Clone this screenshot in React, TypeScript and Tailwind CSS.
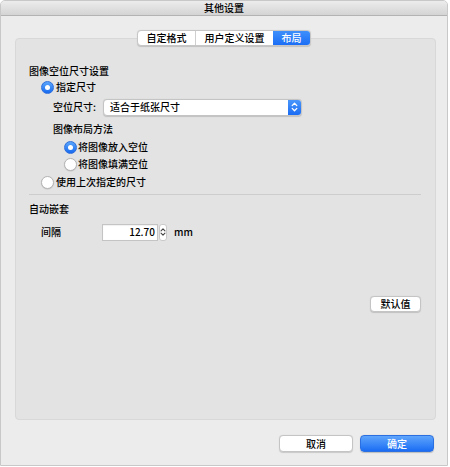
import React from "react"

const font = { fontFamily: '"Noto Sans CJK SC", "Noto Sans", sans-serif' }

function Radio({ checked }: { checked?: boolean }) {
  if (checked) {
    return (
      <span className="flex h-[13px] w-[13px] shrink-0 items-center justify-center rounded-full border border-[#2f6fdc] bg-gradient-to-b from-[#5aa5fb] to-[#1669f0]">
        <span className="h-[5px] w-[5px] rounded-full bg-white" />
      </span>
    )
  }
  return (
    <span className="h-[13px] w-[13px] shrink-0 rounded-full border border-[#b4b4b4] bg-white shadow-[0_0.5px_1px_rgba(0,0,0,0.15)]" />
  )
}

function Chevrons({ color }: { color: string }) {
  return (
    <svg width="7" height="10" viewBox="0 0 7 10" fill="none" stroke={color} strokeWidth="1.3" strokeLinecap="round" strokeLinejoin="round">
      <path d="M1.2 3.6 L3.5 1.3 L5.8 3.6" />
      <path d="M1.2 6.4 L3.5 8.7 L5.8 6.4" />
    </svg>
  )
}

export default function App() {
  return (
    <div className="h-[467px] w-[450px] overflow-hidden bg-white text-[10px] font-medium text-black" style={font}>
      <div className="flex h-[466px] w-[448px] flex-col overflow-hidden rounded-t-[5px] border border-[#c8c8c8] bg-[#ececec]">
        {/* title bar */}
        <div className="flex h-[15px] shrink-0 items-center justify-center border-b border-[#b3b3b3] bg-gradient-to-b from-[#ececec] to-[#d4d4d4] leading-none">
          其他设置
        </div>

        <div className="flex flex-1 flex-col pl-[14px] pr-[12px] pt-[14px]">
          {/* tabs */}
          <div className="relative z-10 flex justify-center pr-[2px]">
            <div className="flex h-[16px] overflow-hidden rounded-[4px] border border-[#c6c6c6] bg-white leading-none shadow-[0_0.5px_1px_rgba(0,0,0,0.15)]">
              <div className="flex w-[58px] items-center justify-center border-r border-[#cfcfcf]">自定格式</div>
              <div className="flex w-[77px] items-center justify-center">用户定义设置</div>
              <div className="flex w-[37px] items-center justify-center bg-gradient-to-b from-[#3e8ffb] to-[#1b6ef4] text-white">布局</div>
            </div>
          </div>

          {/* group box */}
          <div className="-mt-[8px] flex h-[382px] w-[421px] flex-col rounded-[4px] border border-[#d8d8d8] bg-[#e3e3e3] pl-[13px] pr-[14px] pt-[24px] leading-none">
            <div className="flex h-[16px] items-center">图像空位尺寸设置</div>

            <div className="flex h-[16px] items-center gap-[2px] pl-[12px]">
              <Radio checked />
              <span>指定尺寸</span>
            </div>

            <div className="mt-[2px] flex h-[20px] items-center pl-[24px]">
              <span className="w-[50px]">空位尺寸:</span>
              <div className="flex h-[17px] w-[199px] items-stretch overflow-hidden rounded-[4px] border border-[#c4c4c4] bg-white shadow-[0_0.5px_1px_rgba(0,0,0,0.15)]">
                <span className="flex flex-1 items-center pl-[6px]">适合于纸张尺寸</span>
                <span className="flex w-[13px] items-center justify-center bg-gradient-to-b from-[#4a96fb] to-[#1a6cf3]">
                  <Chevrons color="#ffffff" />
                </span>
              </div>
            </div>

            <div className="mt-[4px] flex h-[16px] items-center pl-[24px]">图像布局方法</div>

            <div className="mt-[2px] flex h-[16px] items-center gap-[1px] pl-[35px]">
              <Radio checked />
              <span>将图像放入空位</span>
            </div>

            <div className="mt-[1px] flex h-[16px] items-center gap-[1px] pl-[35px]">
              <Radio />
              <span>将图像填满空位</span>
            </div>

            <div className="mt-[2px] flex h-[16px] items-center gap-[2px] pl-[12px]">
              <Radio />
              <span>使用上次指定的尺寸</span>
            </div>

            <div className="mt-[4px] h-px w-[392px] bg-[#cdcdcd]" />

            <div className="mt-[6px] flex h-[16px] items-center">自动嵌套</div>

            <div className="mt-[5px] flex h-[20px] items-center pl-[12px]">
              <span className="w-[61px]">间隔</span>
              <div className="flex h-[17px] w-[56px] items-center justify-end border border-[#c4c4c4] bg-white pr-[2px] shadow-[inset_0_0.5px_1px_rgba(0,0,0,0.1)]">
                12.70
              </div>
              <div className="ml-[1px] flex h-[17px] w-[8px] items-center justify-center rounded-[3px] border border-[#c9c9c9] bg-white">
                <Chevrons color="#444444" />
              </div>
              <span className="ml-[7px]">mm</span>
            </div>

            <div className="mt-[54px] flex justify-end">
              <button className="flex h-[16px] w-[51px] items-center justify-center rounded-[4px] border border-[#c4c4c4] bg-white leading-none shadow-[0_0.5px_1px_rgba(0,0,0,0.15)]">
                默认值
              </button>
            </div>
          </div>

          {/* dialog buttons */}
          <div className="mt-[15px] flex justify-end gap-[7px] pr-[1px]">
            <button className="flex h-[17px] w-[74px] items-center justify-center rounded-[4px] border border-[#c4c4c4] bg-white leading-none shadow-[0_0.5px_1px_rgba(0,0,0,0.15)]">
              取消
            </button>
            <button className="flex h-[17px] w-[74px] items-center justify-center rounded-[4px] border border-[#2c6fe0] bg-gradient-to-b from-[#5ea5fc] to-[#1a6cf3] leading-none text-white shadow-[0_0.5px_1px_rgba(0,0,0,0.2)]">
              确定
            </button>
          </div>
        </div>
      </div>
    </div>
  )
}
